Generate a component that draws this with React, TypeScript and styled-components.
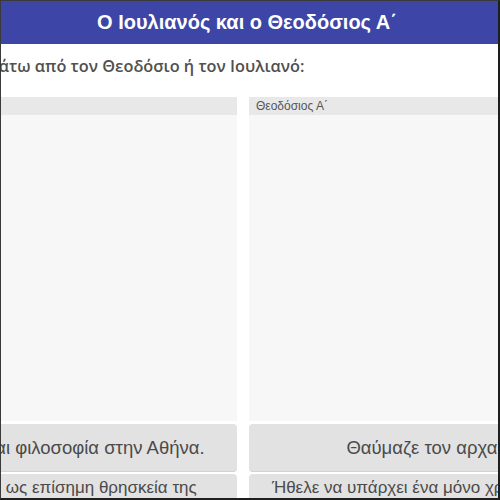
import styled, { createGlobalStyle } from 'styled-components';

const GlobalStyle = createGlobalStyle`
	html, body {
		margin: 0;
		padding: 0;
		background: #ffffff;
	}
	* {
		box-sizing: border-box;
	}
`;

const pool = [
	{
		left: 'Σπούδασε ρητορική και φιλοσοφία στην Αθήνα.',
		right: 'Θαύμαζε τον αρχαίο πολιτισμό.',
	},
	{
		left: 'Όρισε τον χριστιανισμό ως επίσημη θρησκεία της αυτοκρατορίας.',
		right: 'Ήθελε να υπάρχει ένα μόνο χριστιανικό δόγμα για την αυτοκρατορία.',
	},
];

const App = () => {
	return (
		<>
			<GlobalStyle />
			<StyledStage>
				<StyledPage>
					<StyledHeader>Ο Ιουλιανός και ο Θεοδόσιος Α΄</StyledHeader>
					<StyledInstruction>
						Σύρε κάθε πρόταση παρακάτω από τον Θεοδόσιο ή τον Ιουλιανό:
					</StyledInstruction>
					<StyledColumns>
						<StyledColumn>
							<StyledColumnTitle>Ιουλιανός</StyledColumnTitle>
							<StyledDropZone />
						</StyledColumn>
						<StyledColumn>
							<StyledColumnTitle>Θεοδόσιος Α΄</StyledColumnTitle>
							<StyledDropZone />
						</StyledColumn>
					</StyledColumns>
					<StyledPool>
						{pool.map((row, i) => (
							<StyledPoolRow key={i}>
								<StyledCard $single={i === 0}>{row.left}</StyledCard>
								<StyledCard $single={i === 0}>{row.right}</StyledCard>
							</StyledPoolRow>
						))}
					</StyledPool>
				</StyledPage>
			</StyledStage>
		</>
	);
};

export default App;

const StyledStage = styled.div`
	width: 500px;
	height: 500px;
	overflow: hidden;
	border-top: 1px solid #3a3a3a;
	border-left: 1px solid #3a3a3a;
	border-right: 2px solid #1e1e1e;
	border-bottom: 2px solid #1e1e1e;
	background: #ffffff;
`;

const StyledPage = styled.div`
	width: 912px;
	margin-left: -214px;
	font-family: 'Liberation Sans', Arial, sans-serif;
`;

const StyledHeader = styled.header`
	height: 43px;
	background-color: #3d45a7;
	color: #ffffff;
	font-size: 20px;
	font-weight: bold;
	display: flex;
	align-items: center;
	justify-content: center;
	padding-left: 8px;
`;

const StyledInstruction = styled.div`
	padding: 11px 0 0 2px;
	height: 53px;
	font-family: 'Open Sans', 'Liberation Sans', sans-serif;
	font-size: 16.3px;
	font-weight: 600;
	color: #505050;
	white-space: nowrap;
`;

const StyledColumns = styled.div`
	display: grid;
	grid-template-columns: 1fr 1fr;
	column-gap: 12px;
`;

const StyledColumn = styled.div`
	display: flex;
	flex-direction: column;
`;

const StyledColumnTitle = styled.div`
	height: 18px;
	background: #e8e8e8;
	font-size: 12px;
	color: #555555;
	padding: 2px 7px 0;
	line-height: 14px;
`;

const StyledDropZone = styled.div`
	height: 306px;
	background: #f7f7f7;
`;

const StyledPool = styled.div`
	display: flex;
	flex-direction: column;
	gap: 2px;
	margin-top: 3px;
`;

const StyledPoolRow = styled.div`
	display: grid;
	grid-template-columns: 1fr 1fr;
	column-gap: 12px;
`;

const StyledCard = styled.div<{ $single?: boolean }>`
	background: #e2e2e2;
	border-radius: 4px;
	border-bottom: 1px solid #d2d2d2;
	min-height: 47px;
	padding: ${(p) => (p.$single ? '13px 16px' : '4px 16px')};
	font-size: ${(p) => (p.$single ? '18.5px' : '17px')};
	line-height: ${(p) => (p.$single ? '21px' : '20px')};
	color: #4a4a4a;
	text-align: center;
`;
